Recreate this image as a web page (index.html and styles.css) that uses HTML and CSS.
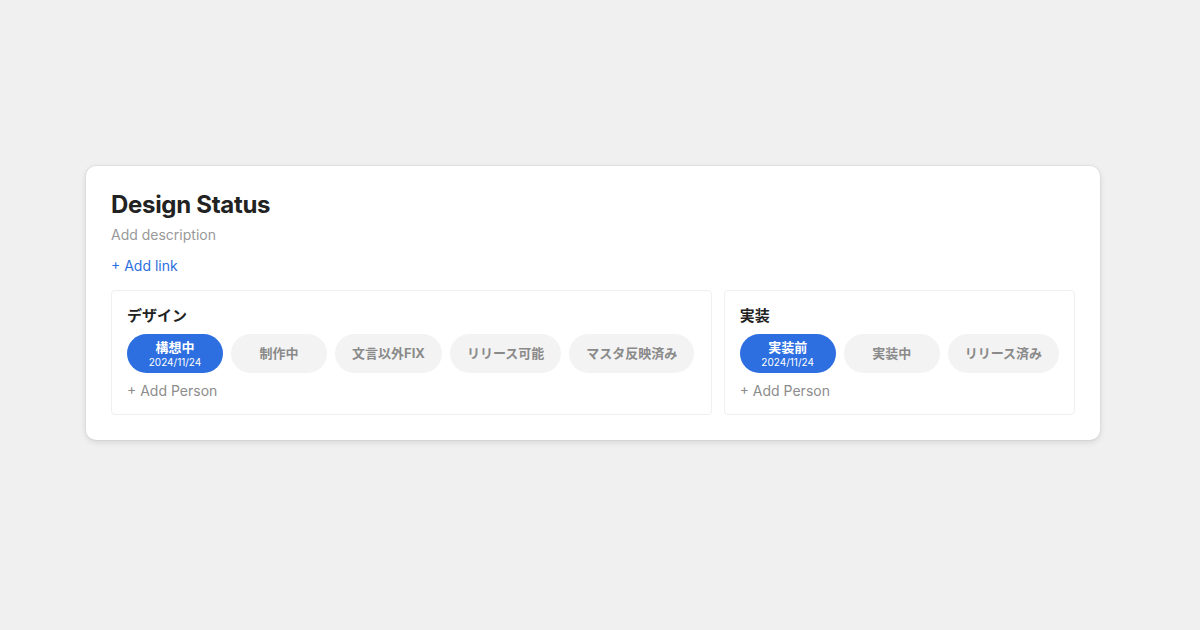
FILE: index.html
```html
<!DOCTYPE html>
<html lang="ja">
<head>
    <meta charset="UTF-8">
    <title>Design Status</title>
    <link rel="stylesheet" href="styles.css">
</head>
<body>
    <div class="card">
        <h1 class="card-title">Design Status</h1>
        <p class="card-desc">Add description</p>
        <a class="add-link" href="#">+ Add link</a>

        <div class="groups">
            <!-- デザイン -->
            <div class="group group-wide">
                <h3 class="group-title">デザイン</h3>
                <div class="pills">
                    <div class="pill active">
                        <span class="pill-label">構想中</span>
                        <span class="pill-date">2024/11/24</span>
                    </div>
                    <div class="pill"><span class="pill-label">制作中</span></div>
                    <div class="pill"><span class="pill-label">文言以外FIX</span></div>
                    <div class="pill"><span class="pill-label">リリース可能</span></div>
                    <div class="pill"><span class="pill-label">マスタ反映済み</span></div>
                </div>
                <a class="add-person" href="#">+ Add Person</a>
            </div>

            <!-- 実装 -->
            <div class="group">
                <h3 class="group-title">実装</h3>
                <div class="pills">
                    <div class="pill active">
                        <span class="pill-label">実装前</span>
                        <span class="pill-date">2024/11/24</span>
                    </div>
                    <div class="pill"><span class="pill-label">実装中</span></div>
                    <div class="pill"><span class="pill-label">リリース済み</span></div>
                </div>
                <a class="add-person" href="#">+ Add Person</a>
            </div>
        </div>
    </div>
</body>
</html>
```

FILE: styles.css
```css
* {
    margin: 0;
    padding: 0;
    box-sizing: border-box;
}

body {
    width: 1200px;
    height: 630px;
    background: #f0f0f0;
    font-family: Inter, "Noto Sans CJK JP", sans-serif;
    display: flex;
    justify-content: center;
    align-items: center;
    padding: 0 14px 24px 0;
}

/* Card */
.card {
    width: 1014px;
    background: #fff;
    border-radius: 10px;
    box-shadow: 0 2px 6px rgba(0, 0, 0, 0.12), 0 0 0 1px rgba(0, 0, 0, 0.03);
    padding: 24px 25px 25px 25px;
}

.card-title {
    font-size: 24px;
    font-weight: 700;
    color: #222;
    line-height: 29px;
    letter-spacing: -0.3px;
}

.card-desc {
    font-size: 14px;
    color: #999;
    line-height: 20px;
    margin-top: 6px;
}

.add-link {
    display: inline-block;
    font-size: 14px;
    color: #2d6fe0;
    text-decoration: none;
    line-height: 20px;
    margin-top: 11px;
}

/* Groups */
.groups {
    display: flex;
    gap: 12px;
    margin-top: 14px;
}

.group {
    border: 1px solid #efefef;
    border-radius: 4px;
    padding: 14px 15px 13px 15px;
}

.group-wide {
    flex: 1;
}

.group-title {
    font-size: 15px;
    font-weight: 700;
    color: #222;
    line-height: 22px;
}

.pills {
    display: flex;
    gap: 8px;
    margin-top: 7px;
}

.pill {
    min-width: 96px;
    height: 39px;
    padding: 0 17px;
    border-radius: 20px;
    background: #f3f3f3;
    display: flex;
    flex-direction: column;
    justify-content: center;
    align-items: center;
}

.pill-label {
    font-size: 13px;
    font-weight: 700;
    color: #8a8a8a;
    line-height: 17px;
}

.pill.active {
    background: #2d6fe0;
}

.pill.active .pill-label {
    color: #fff;
}

.pill-date {
    font-size: 10px;
    color: #fff;
    line-height: 12px;
}

.add-person {
    display: inline-block;
    font-size: 14px;
    color: #8c8c8c;
    text-decoration: none;
    line-height: 20px;
    margin-top: 8px;
}
```
